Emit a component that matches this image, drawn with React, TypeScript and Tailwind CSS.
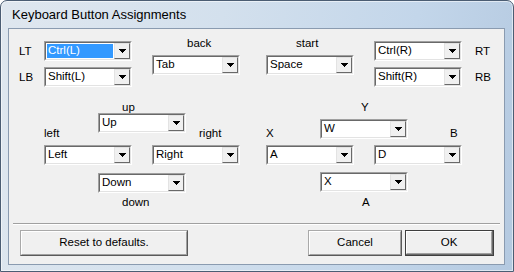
import React from "react";

const FONT = "font-['Liberation_Sans',Arial,sans-serif]";

function DropButton() {
  return (
    <div className="flex w-[16px] shrink-0 items-center justify-center border border-t-[#e3e3e3] border-l-[#e3e3e3] border-r-[#696969] border-b-[#696969] bg-[#f0f0f0]">
      <svg width="7" height="4" viewBox="0 0 7 4" shapeRendering="crispEdges">
        <path d="M0 0h7v1h-1v1h-1v1h-1v1h-1v-1h-1v-1h-1v-1h-1z" fill="#000" />
      </svg>
    </div>
  );
}

function Combo({ value, selected = false }: { value: string; selected?: boolean }) {
  return (
    <div className="flex h-[20px] w-[88px] shrink-0 border border-t-[#a0a0a0] border-l-[#a0a0a0] border-r-white border-b-white">
      <div className="flex flex-1 border border-t-[#696969] border-l-[#696969] border-r-[#e3e3e3] border-b-[#e3e3e3] bg-white">
        <div
          className={`m-[1px] flex flex-1 items-center pl-[1px] text-[11.5px] leading-none ${
            selected ? "bg-[#3399ff] text-white" : "text-black"
          }`}
        >
          {value}
        </div>
        <DropButton />
      </div>
    </div>
  );
}

function Label({ children, className = "" }: { children: React.ReactNode; className?: string }) {
  return <div className={`h-[12px] text-[11.5px] leading-[12px] text-black ${className}`}>{children}</div>;
}

function Button({ label, className, isDefault = false }: { label: string; className: string; isDefault?: boolean }) {
  const face = (
    <div className="flex flex-1 items-center justify-center border border-t-white border-l-white border-r-[#a0a0a0] border-b-[#a0a0a0] bg-[#f0f0f0] text-[11.5px] text-black">
      {label}
    </div>
  );
  if (isDefault) {
    return (
      <div className={`flex h-[26px] border border-[#3f3f3f] ${className}`}>
        <div className="flex flex-1 border-r border-b border-r-[#696969] border-b-[#696969]">{face}</div>
      </div>
    );
  }
  return (
    <div className={`flex h-[26px] border border-t-[#a9a9a9] border-l-[#a9a9a9] border-r-[#5a5a5a] border-b-[#5a5a5a] ${className}`}>
      {face}
    </div>
  );
}

export default function App() {
  return (
    <div className={`h-[272px] w-[514px] bg-white ${FONT}`}>
      <div className="flex h-[272px] w-[514px] flex-col rounded-t-[7px] border border-[#4b5d73] bg-[linear-gradient(100deg,#dfe7ef_0%,#d3e0ed_40%,#c3d6ea_75%,#b4c9e0_100%)] shadow-[inset_0_0_0_1px_rgba(255,255,255,0.55)]">
        {/* Title bar */}
        <div className="flex h-[27px] items-center pl-[11px] pt-[1px] text-[13px] text-black">
          Keyboard Button Assignments
        </div>

        {/* Client area */}
        <div className="ml-[7px] flex h-[237px] w-[497px] flex-col border border-[#8a9bb0] bg-[#f0f0f0]">
          {/* Shoulder / menu buttons */}
          <div className="flex pt-[12px]">
            <div className="ml-[10px] flex flex-col gap-[6px]">
              <div className="flex items-center">
                <Label className="w-[25px]">LT</Label>
                <Combo value="Ctrl(L)" selected />
              </div>
              <div className="flex items-center">
                <Label className="w-[25px]">LB</Label>
                <Combo value="Shift(L)" />
              </div>
            </div>

            <div className="-mt-[4px] ml-[20px] flex flex-col gap-[6px]">
              <Label className="pl-[35px]">back</Label>
              <Combo value="Tab" />
            </div>

            <div className="-mt-[4px] ml-[26px] flex flex-col gap-[6px]">
              <Label className="pl-[30px]">start</Label>
              <Combo value="Space" />
            </div>

            <div className="ml-[20px] flex flex-col gap-[6px]">
              <div className="flex items-center">
                <Combo value="Ctrl(R)" />
                <Label className="ml-[13px]">RT</Label>
              </div>
              <div className="flex items-center">
                <Combo value="Shift(R)" />
                <Label className="ml-[13px]">RB</Label>
              </div>
            </div>
          </div>

          {/* D-pad and face buttons */}
          <div className="mt-[14px] flex">
            <div className="ml-[35px] flex w-[196px] flex-col">
              <Label className="pl-[78px]">up</Label>
              <div className="flex items-start">
                <Label className="mt-[14px] w-[54px]">left</Label>
                <Combo value="Up" />
                <Label className="ml-[13px] mt-[14px]">right</Label>
              </div>
              <div className="mt-[6px] flex gap-[20px]">
                <Combo value="Left" />
                <Combo value="Right" />
              </div>
              <div className="mt-[8px] flex pl-[54px]">
                <Combo value="Down" />
              </div>
              <Label className="mt-[3px] pl-[78px]">down</Label>
            </div>

            <div className="ml-[26px] flex flex-col">
              <Label className="pl-[95px]">Y</Label>
              <div className="mt-[6px] flex items-start">
                <Label className="mt-[8px] w-[54px]">X</Label>
                <Combo value="W" />
                <Label className="ml-[42px] mt-[8px]">B</Label>
              </div>
              <div className="mt-[6px] flex gap-[20px]">
                <Combo value="A" />
                <Combo value="D" />
              </div>
              <div className="mt-[7px] flex pl-[54px]">
                <Combo value="X" />
              </div>
              <Label className="mt-[4px] pl-[96px]">A</Label>
            </div>
          </div>

          {/* Separator */}
          <div className="ml-[4px] mt-[15px] w-[487px] border-t border-b border-t-[#a0a0a0] border-b-white" />

          {/* Buttons */}
          <div className="mt-[5px] flex pl-[11px]">
            <Button label="Reset to defaults." className="w-[168px]" />
            <Button label="Cancel" className="ml-[120px] w-[94px]" />
            <Button label="OK" className="ml-[3px] w-[89px]" isDefault />
          </div>
        </div>
      </div>
    </div>
  );
}
